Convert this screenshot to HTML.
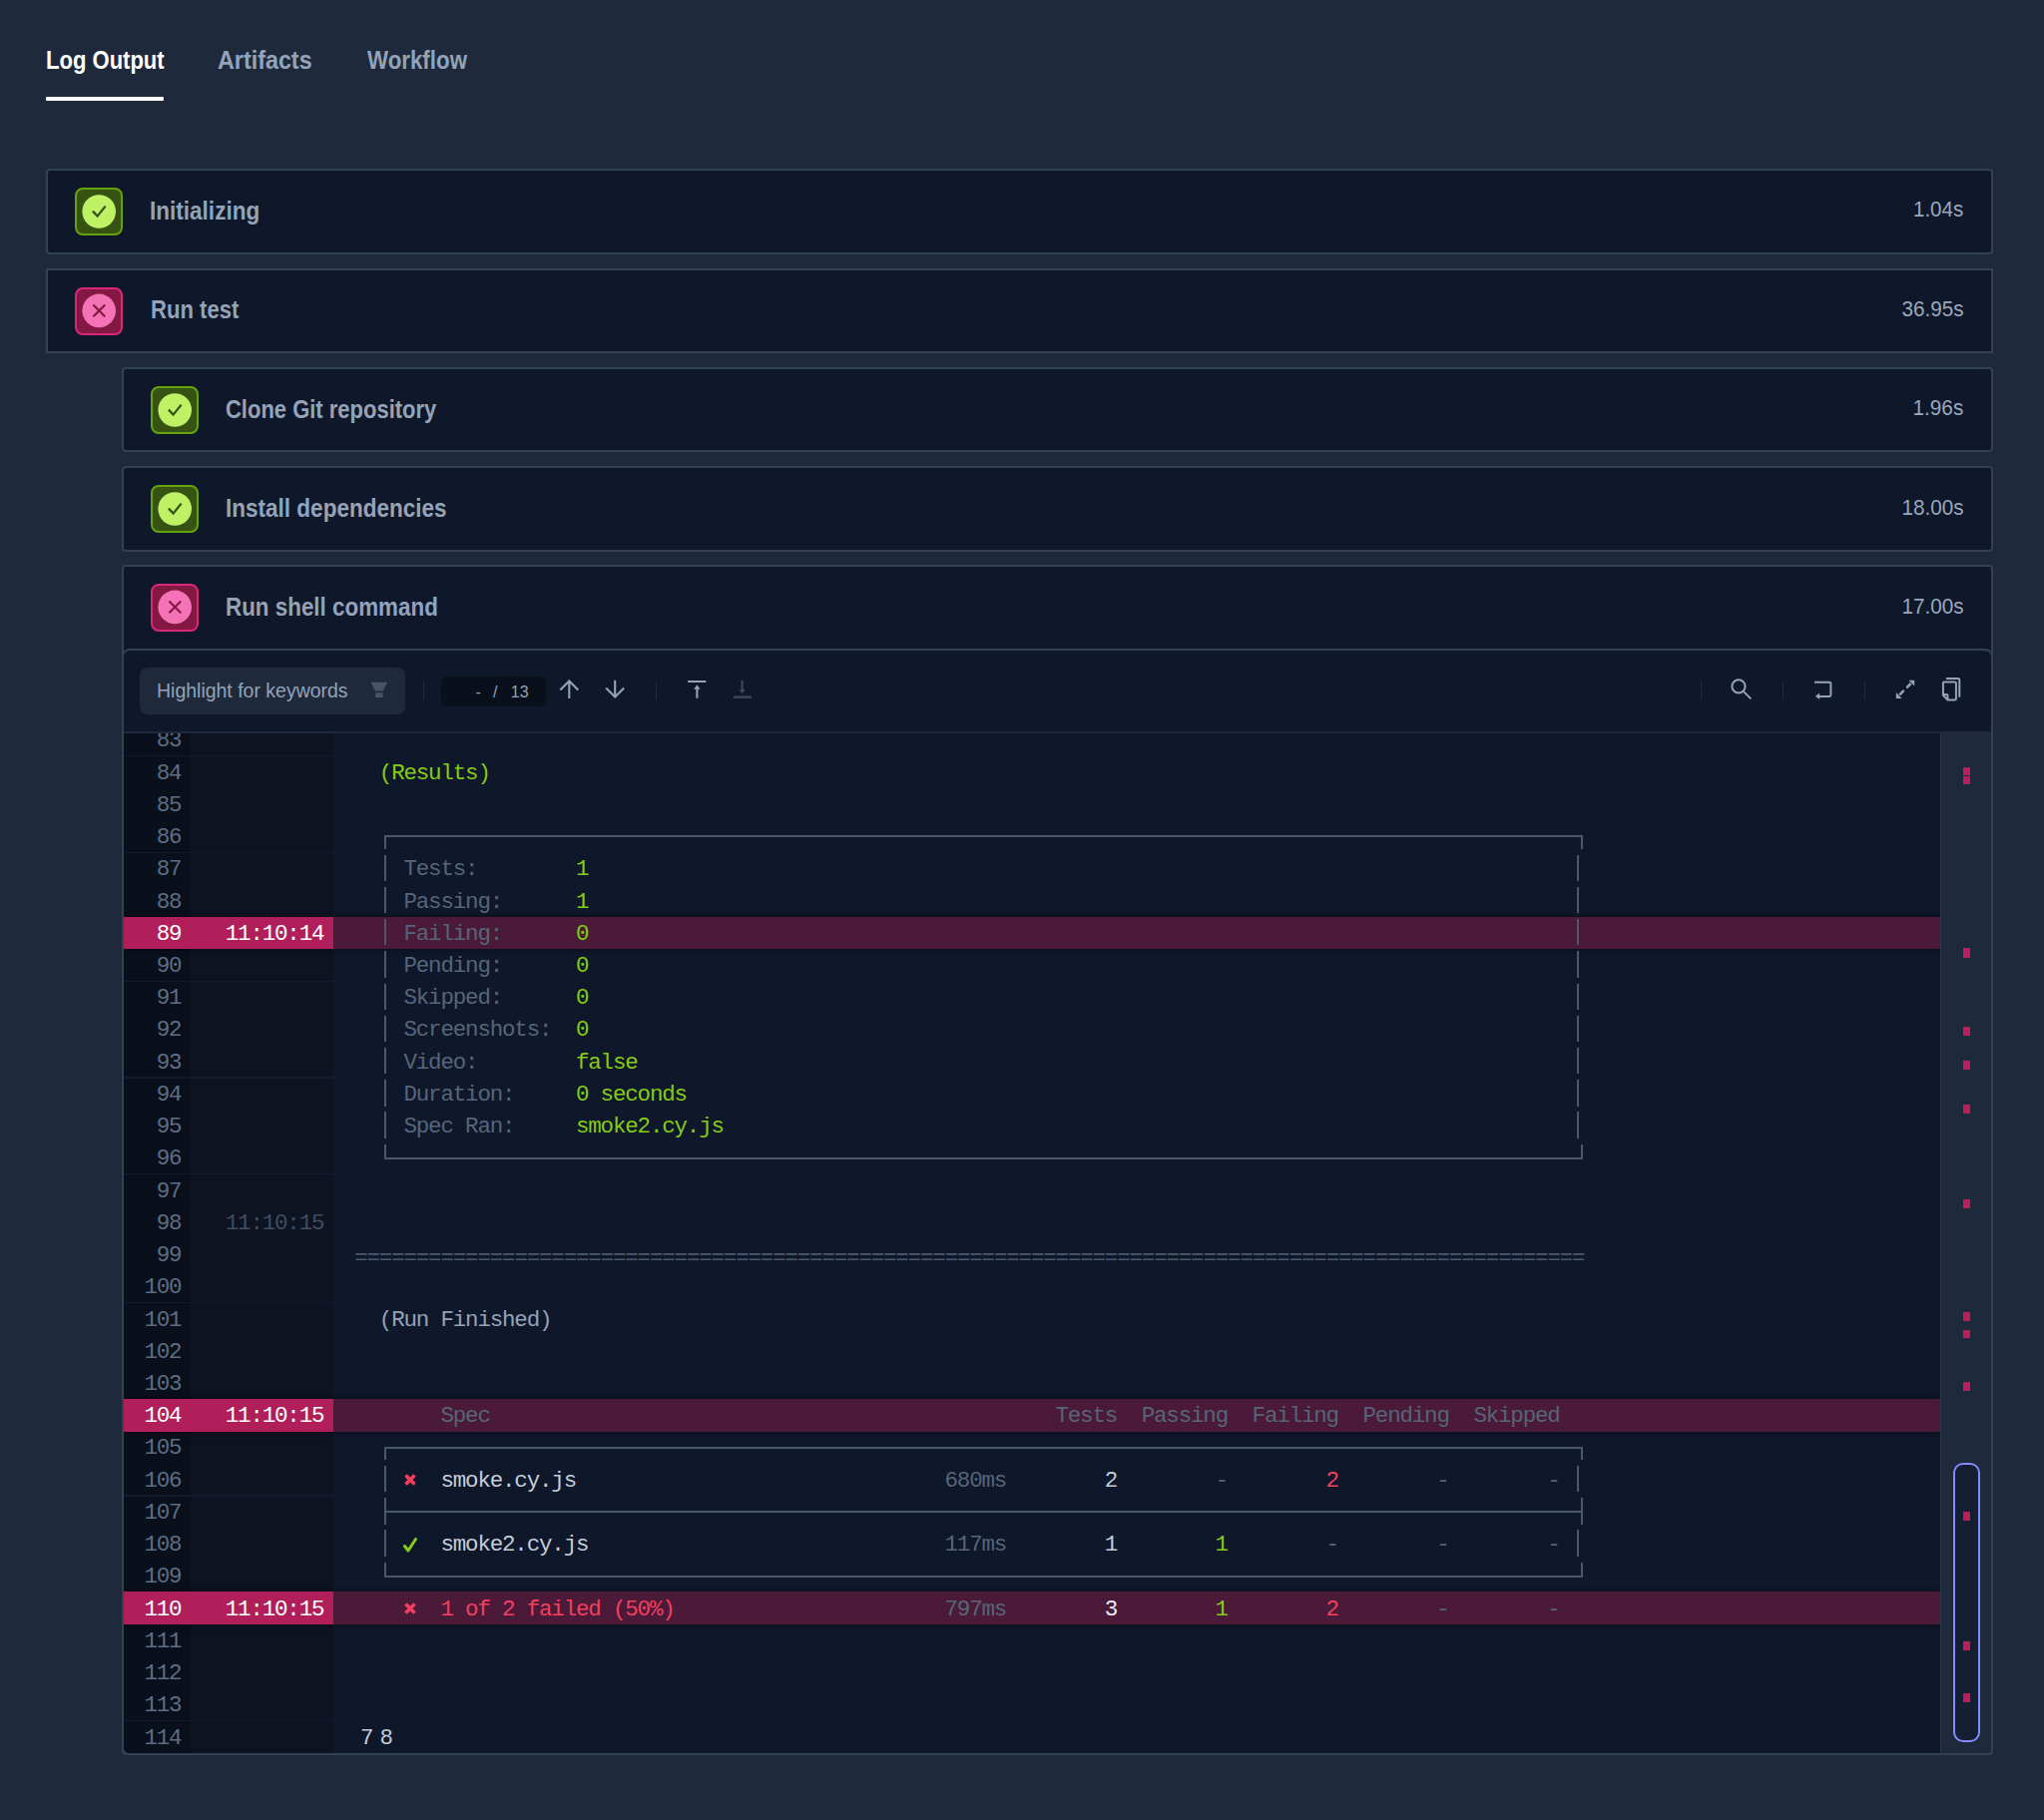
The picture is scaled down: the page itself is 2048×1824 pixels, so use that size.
<!DOCTYPE html><html><head><meta charset="utf-8"><style>
*{box-sizing:border-box;margin:0;padding:0}
html,body{width:2048px;height:1824px;overflow:hidden;background:#1e293b}
body{position:relative;font-family:"Liberation Sans",sans-serif}
.a{position:absolute}
.tab{position:absolute;font-weight:bold;font-size:25.5px;line-height:30px;white-space:nowrap;transform-origin:0 0}
.panel{position:absolute;height:86px;background:#0f172a;border:2px solid #334155;border-radius:4px}
.ttl{position:absolute;font-weight:bold;font-size:25px;line-height:30px;color:#94a3b8;white-space:nowrap;transform-origin:0 0}
.dur{position:absolute;font-size:22px;line-height:26px;color:#9aa8bc;white-space:nowrap;text-align:right;transform-origin:100% 0}
.ico{position:absolute;width:48px;height:48px;border-radius:8px;border:2px solid}
.ico.ok{background:#365314;border-color:#65a30d}
.ico.err{background:#831843;border-color:#db2777}
.ico svg{position:absolute;left:-2px;top:-2px}
.m{position:absolute;font-family:"Liberation Mono",monospace;white-space:pre;font-size:22.5px;letter-spacing:-1.180px;line-height:32.2px;height:32.2px}
.ln{text-align:right}
</style></head><body>
<div class="a" style="left:45.70px;top:40.29px;font-size:25.70px;line-height:40px;font-weight:bold;color:#ffffff;white-space:nowrap;transform:scaleX(0.8576);transform-origin:0 0">Log Output</div>
<div class="a" style="left:218.36px;top:40.19px;font-size:25.70px;line-height:40px;font-weight:bold;color:#94a3b8;white-space:nowrap;transform:scaleX(0.9078);transform-origin:0 0">Artifacts</div>
<div class="a" style="left:368.00px;top:40.19px;font-size:25.70px;line-height:40px;font-weight:bold;color:#94a3b8;white-space:nowrap;transform:scaleX(0.8685);transform-origin:0 0">Workflow</div>
<div class="a" style="left:46px;top:97px;width:118px;height:4px;background:#fff;border-radius:1px"></div>
<div class="panel" style="left:46px;top:169px;width:1951px"></div>
<div class="ico ok" style="left:75.0px;top:188.0px"><svg width="48" height="48" viewBox="0 0 48 48"><circle cx="24.2" cy="24" r="16.8" fill="#bef264"/><path d="M17.9 23.6 L22.6 28.6 L30.6 18.6" fill="none" stroke="#365314" stroke-width="2.3" stroke-linecap="butt" stroke-linejoin="miter"/></svg></div>
<div class="a" style="left:150.36px;top:191.44px;font-size:25.00px;line-height:40px;font-weight:bold;color:#94a3b8;white-space:nowrap;transform:scaleX(0.9017);transform-origin:0 0">Initializing</div>
<div class="a" style="right:80.26px;top:190.41px;font-size:22.20px;line-height:40px;font-weight:normal;color:#9aa8bc;white-space:nowrap;transform:scaleX(0.9270);transform-origin:100% 0">1.04s</div>
<div class="panel" style="left:46px;top:269px;width:1951px;border-radius:0;height:85px"></div>
<div class="ico err" style="left:75.0px;top:288.0px"><svg width="48" height="48" viewBox="0 0 48 48"><circle cx="24.2" cy="23.4" r="16.8" fill="#f472b6"/><path d="M18.4 17.5 L30.2 29.3 M30.2 17.5 L18.4 29.3" fill="none" stroke="#831843" stroke-width="2.1" stroke-linecap="butt"/></svg></div>
<div class="a" style="left:150.89px;top:290.34px;font-size:25.00px;line-height:40px;font-weight:bold;color:#94a3b8;white-space:nowrap;transform:scaleX(0.8837);transform-origin:0 0">Run test</div>
<div class="a" style="right:80.26px;top:290.31px;font-size:22.20px;line-height:40px;font-weight:normal;color:#9aa8bc;white-space:nowrap;transform:scaleX(0.9324);transform-origin:100% 0">36.95s</div>
<div class="panel" style="left:122px;top:368px;width:1875px;height:85px"></div>
<div class="ico ok" style="left:151.0px;top:387.0px"><svg width="48" height="48" viewBox="0 0 48 48"><circle cx="24.2" cy="24" r="16.8" fill="#bef264"/><path d="M17.9 23.6 L22.6 28.6 L30.6 18.6" fill="none" stroke="#365314" stroke-width="2.3" stroke-linecap="butt" stroke-linejoin="miter"/></svg></div>
<div class="a" style="left:225.89px;top:389.54px;font-size:25.00px;line-height:40px;font-weight:bold;color:#94a3b8;white-space:nowrap;transform:scaleX(0.8791);transform-origin:0 0">Clone Git repository</div>
<div class="a" style="right:80.26px;top:389.31px;font-size:22.20px;line-height:40px;font-weight:normal;color:#9aa8bc;white-space:nowrap;transform:scaleX(0.9348);transform-origin:100% 0">1.96s</div>
<div class="panel" style="left:122px;top:467px;width:1875px"></div>
<div class="ico ok" style="left:151.0px;top:486.0px"><svg width="48" height="48" viewBox="0 0 48 48"><circle cx="24.2" cy="24" r="16.8" fill="#bef264"/><path d="M17.9 23.6 L22.6 28.6 L30.6 18.6" fill="none" stroke="#365314" stroke-width="2.3" stroke-linecap="butt" stroke-linejoin="miter"/></svg></div>
<div class="a" style="left:225.89px;top:488.94px;font-size:25.00px;line-height:40px;font-weight:bold;color:#94a3b8;white-space:nowrap;transform:scaleX(0.9011);transform-origin:0 0">Install dependencies</div>
<div class="a" style="right:80.26px;top:488.51px;font-size:22.20px;line-height:40px;font-weight:normal;color:#9aa8bc;white-space:nowrap;transform:scaleX(0.9328);transform-origin:100% 0">18.00s</div>
<div class="a" style="left:122px;top:566px;width:1875px;height:1193px;background:#0f172a;border:2px solid #334155;border-radius:4px"></div>
<div class="ico err" style="left:151.0px;top:585.0px"><svg width="48" height="48" viewBox="0 0 48 48"><circle cx="24.2" cy="23.4" r="16.8" fill="#f472b6"/><path d="M18.4 17.5 L30.2 29.3 M30.2 17.5 L18.4 29.3" fill="none" stroke="#831843" stroke-width="2.1" stroke-linecap="butt"/></svg></div>
<div class="a" style="left:225.89px;top:587.94px;font-size:25.00px;line-height:40px;font-weight:bold;color:#94a3b8;white-space:nowrap;transform:scaleX(0.8959);transform-origin:0 0">Run shell command</div>
<div class="a" style="right:80.26px;top:587.71px;font-size:22.20px;line-height:40px;font-weight:normal;color:#9aa8bc;white-space:nowrap;transform:scaleX(0.9328);transform-origin:100% 0">17.00s</div>
<div class="a" style="left:122px;top:650px;width:1875px;height:1109px;border:2px solid #334155;border-radius:8px;background:#0f172a"></div>
<div class="a" style="left:124px;top:733px;width:1871px;height:2px;background:#1e293b"></div>
<div class="a" style="left:140px;top:669px;width:266px;height:47px;background:#1e293b;border-radius:8px"></div>
<div class="a" style="left:156.73px;top:672.16px;font-size:20.90px;line-height:40px;font-weight:normal;color:#94a3b8;white-space:nowrap;transform:scaleX(0.9323);transform-origin:0 0">Highlight for keywords</div>
<svg class="a" style="left:360px;top:675px" width="40" height="30" viewBox="360 675 40 30"><path d="M371.35 683.8 L388.2 683.8 L383.7 692.6 L376 692.6 Z M376.2 694.2 H383.5 V698.9 H376.2 Z" fill="#475569"/></svg>
<div class="a" style="left:423.5px;top:683px;width:1.5px;height:19px;background:#1e293b"></div>
<div class="a" style="left:442px;top:677.5px;width:105px;height:30px;background:#0a0f1c;border-radius:7px"></div>
<div class="a" style="left:476.4px;top:681.5px;font-size:16px;line-height:24px;color:#94a3b8;white-space:pre">-</div>
<div class="a" style="left:494.0px;top:681.5px;font-size:16px;line-height:24px;color:#94a3b8;white-space:pre">/</div>
<div class="a" style="left:511.8px;top:681.5px;font-size:16px;line-height:24px;color:#94a3b8;white-space:pre">13</div>
<svg class="a" style="left:0;top:0" width="2048" height="760" viewBox="0 0 2048 760"><g fill="none" stroke="#94a3b8" stroke-width="2.1" stroke-linecap="butt" stroke-linejoin="miter"><path d="M570.3 683 V700.1 M561.3 691.4 L570.3 682.4 L579.3 691.4"/><path d="M616.2 681.7 V698.6 M607.2 689.4 L616.2 698.6 L625.2 689.4"/><path d="M689.2 683 H707.4 M698.4 690 V699.7"/></g><path d="M698.4 686.2 L701.6 690.8 H695.2 Z" fill="#94a3b8"/><path d="M743.6 681.9 V691.8 M734.8 698.6 H752.8" fill="none" stroke="#3d4a5c" stroke-width="2.1"/><path d="M743.6 694.9 L746.6 690.9 H740.6 Z" fill="#3d4a5c"/><g fill="none" stroke="#94a3b8" stroke-width="2" stroke-linecap="butt"><circle cx="1742" cy="687.9" r="6.6"/><path d="M1746.8 692.9 L1754.4 700.4"/><path d="M1818 683.8 H1833 Q1834.4 683.8 1834.4 685.2 V696.5 Q1834.4 697.9 1833 697.9 H1822.5"/><path d="M1914.6 685 L1910.3 689.3 M1903.2 696.4 L1907.7 691.9" stroke-width="2.5"/><path d="M1949.9 680.1 H1961.9 Q1963.3 680.1 1963.3 681.5 V698.7"/><path d="M1946.9 696.8 V684.6 Q1946.9 683.4 1948.1 683.4 H1958.7 Q1959.9 683.4 1959.9 684.6 V700.2 Q1959.9 701.4 1958.7 701.4 H1951.5 Z M1946.9 695.9 H1950.3 Q1951.5 695.9 1951.5 697.1 V701.4"/></g><path d="M1818.8 697.8 L1823.2 694.6 V701 Z" fill="#94a3b8"/><path d="M1918.2 681.7 V687.6 L1912.3 681.7 Z M1899.8 699.9 V694.0 L1905.7 699.9 Z" fill="#94a3b8"/></svg>
<div class="a" style="left:656.5px;top:683px;width:1.5px;height:19px;background:#1e293b"></div>
<div class="a" style="left:1703.5px;top:683px;width:1.5px;height:19px;background:#1e293b"></div>
<div class="a" style="left:1785.5px;top:683px;width:1.5px;height:19px;background:#1e293b"></div>
<div class="a" style="left:1867.5px;top:683px;width:1.5px;height:19px;background:#1e293b"></div>
<div class="a" style="left:124px;top:735px;width:1820px;height:1022px;overflow:hidden;border-bottom-left-radius:6px;background:#0f172a">
<div class="a" style="left:0;top:0;width:210.4px;height:1022px;background:#0d1321"></div>
<div class="a" style="left:0;top:0;width:67px;height:1022px;background:#0a0f1c"></div>
<div class="a" style="left:0;top:22.05px;width:210.4px;height:1.2px;background:#121a2b"></div>
<div class="a" style="left:0;top:118.74px;width:210.4px;height:1.2px;background:#121a2b"></div>
<div class="a" style="left:0;top:247.66px;width:210.4px;height:1.2px;background:#121a2b"></div>
<div class="a" style="left:0;top:344.35px;width:210.4px;height:1.2px;background:#121a2b"></div>
<div class="a" style="left:0;top:441.04px;width:210.4px;height:1.2px;background:#121a2b"></div>
<div class="a" style="left:0;top:569.96px;width:210.4px;height:1.2px;background:#121a2b"></div>
<div class="a" style="left:0;top:666.65px;width:210.4px;height:1.2px;background:#121a2b"></div>
<div class="a" style="left:0;top:763.34px;width:210.4px;height:1.2px;background:#121a2b"></div>
<div class="a" style="left:0;top:860.03px;width:210.4px;height:1.2px;background:#121a2b"></div>
<div class="a" style="left:0;top:988.95px;width:210.4px;height:1.2px;background:#121a2b"></div>
<div class="a" style="left:0;top:183.50px;width:1820px;height:32.83px;background:#4a1a38;box-shadow:0 0 6px rgba(0,0,0,.45)"></div>
<div class="a" style="left:0;top:183.50px;width:210.4px;height:32.83px;background:#b11f5a"></div>
<div class="a" style="left:0;top:666.95px;width:1820px;height:32.83px;background:#4a1a38;box-shadow:0 0 6px rgba(0,0,0,.45)"></div>
<div class="a" style="left:0;top:666.95px;width:210.4px;height:32.83px;background:#b11f5a"></div>
<div class="a" style="left:0;top:860.33px;width:1820px;height:32.83px;background:#4a1a38;box-shadow:0 0 6px rgba(0,0,0,.45)"></div>
<div class="a" style="left:0;top:860.33px;width:210.4px;height:32.83px;background:#b11f5a"></div>
<div class="m ln" style="right:1762.58px;top:-8.58px;color:#5f6d82">83</div>
<div class="m ln" style="right:1762.58px;top:23.65px;color:#5f6d82">84</div>
<div class="m ln" style="right:1762.58px;top:55.88px;color:#5f6d82">85</div>
<div class="m ln" style="right:1762.58px;top:88.11px;color:#5f6d82">86</div>
<div class="m ln" style="right:1762.58px;top:120.34px;color:#5f6d82">87</div>
<div class="m ln" style="right:1762.58px;top:152.57px;color:#5f6d82">88</div>
<div class="m ln" style="right:1762.58px;top:184.80px;color:#ffffff">89</div>
<div class="m ln" style="right:1762.58px;top:217.03px;color:#5f6d82">90</div>
<div class="m ln" style="right:1762.58px;top:249.26px;color:#5f6d82">91</div>
<div class="m ln" style="right:1762.58px;top:281.49px;color:#5f6d82">92</div>
<div class="m ln" style="right:1762.58px;top:313.72px;color:#5f6d82">93</div>
<div class="m ln" style="right:1762.58px;top:345.95px;color:#5f6d82">94</div>
<div class="m ln" style="right:1762.58px;top:378.18px;color:#5f6d82">95</div>
<div class="m ln" style="right:1762.58px;top:410.41px;color:#5f6d82">96</div>
<div class="m ln" style="right:1762.58px;top:442.64px;color:#5f6d82">97</div>
<div class="m ln" style="right:1762.58px;top:474.87px;color:#5f6d82">98</div>
<div class="m ln" style="right:1762.58px;top:507.10px;color:#5f6d82">99</div>
<div class="m ln" style="right:1762.58px;top:539.33px;color:#5f6d82">100</div>
<div class="m ln" style="right:1762.58px;top:571.56px;color:#5f6d82">101</div>
<div class="m ln" style="right:1762.58px;top:603.79px;color:#5f6d82">102</div>
<div class="m ln" style="right:1762.58px;top:636.02px;color:#5f6d82">103</div>
<div class="m ln" style="right:1762.58px;top:668.25px;color:#ffffff">104</div>
<div class="m ln" style="right:1762.58px;top:700.48px;color:#5f6d82">105</div>
<div class="m ln" style="right:1762.58px;top:732.71px;color:#5f6d82">106</div>
<div class="m ln" style="right:1762.58px;top:764.94px;color:#5f6d82">107</div>
<div class="m ln" style="right:1762.58px;top:797.17px;color:#5f6d82">108</div>
<div class="m ln" style="right:1762.58px;top:829.40px;color:#5f6d82">109</div>
<div class="m ln" style="right:1762.58px;top:861.63px;color:#ffffff">110</div>
<div class="m ln" style="right:1762.58px;top:893.86px;color:#5f6d82">111</div>
<div class="m ln" style="right:1762.58px;top:926.09px;color:#5f6d82">112</div>
<div class="m ln" style="right:1762.58px;top:958.32px;color:#5f6d82">113</div>
<div class="m ln" style="right:1762.58px;top:990.55px;color:#5f6d82">114</div>
<div class="m ln" style="right:1619.68px;top:184.80px;color:#ffffff">11:10:14</div>
<div class="m ln" style="right:1619.68px;top:474.87px;color:#414d60">11:10:15</div>
<div class="m ln" style="right:1619.68px;top:668.25px;color:#ffffff">11:10:15</div>
<div class="m ln" style="right:1619.68px;top:861.63px;color:#ffffff">11:10:15</div>
<div class="m" style="left:255.84px;top:23.65px;color:#84cc16">(Results)</div>
<div class="m" style="left:280.48px;top:120.34px;color:#566579">Tests:</div>
<div class="m" style="left:452.96px;top:120.34px;color:#84cc16">1</div>
<div class="m" style="left:280.48px;top:152.57px;color:#566579">Passing:</div>
<div class="m" style="left:452.96px;top:152.57px;color:#84cc16">1</div>
<div class="m" style="left:280.48px;top:184.80px;color:#566579">Failing:</div>
<div class="m" style="left:452.96px;top:184.80px;color:#84cc16">0</div>
<div class="m" style="left:280.48px;top:217.03px;color:#566579">Pending:</div>
<div class="m" style="left:452.96px;top:217.03px;color:#84cc16">0</div>
<div class="m" style="left:280.48px;top:249.26px;color:#566579">Skipped:</div>
<div class="m" style="left:452.96px;top:249.26px;color:#84cc16">0</div>
<div class="m" style="left:280.48px;top:281.49px;color:#566579">Screenshots:</div>
<div class="m" style="left:452.96px;top:281.49px;color:#84cc16">0</div>
<div class="m" style="left:280.48px;top:313.72px;color:#566579">Video:</div>
<div class="m" style="left:452.96px;top:313.72px;color:#84cc16">false</div>
<div class="m" style="left:280.48px;top:345.95px;color:#566579">Duration:</div>
<div class="m" style="left:452.96px;top:345.95px;color:#84cc16">0 seconds</div>
<div class="m" style="left:280.48px;top:378.18px;color:#566579">Spec Ran:</div>
<div class="m" style="left:452.96px;top:378.18px;color:#84cc16">smoke2.cy.js</div>
<div class="m" style="left:231.20px;top:507.10px;color:#4b596c;margin-top:2.5px">====================================================================================================</div>
<div class="m" style="left:255.84px;top:571.56px;color:#94a3b8">(Run Finished)</div>
<div class="m" style="left:317.44px;top:668.25px;color:#566579">Spec</div>
<div class="m" style="left:933.44px;top:668.25px;color:#566579">Tests  Passing  Failing  Pending  Skipped</div>
<div class="m" style="left:317.44px;top:732.71px;color:#c3cdd9">smoke.cy.js</div>
<div class="m" style="left:822.56px;top:732.71px;color:#566579">680ms</div>
<div class="m" style="left:982.72px;top:732.71px;color:#c3cdd9">2</div>
<div class="m" style="left:1093.60px;top:732.71px;color:#566579">-</div>
<div class="m" style="left:1204.48px;top:732.71px;color:#f43f5e">2</div>
<div class="m" style="left:1315.36px;top:732.71px;color:#566579">-</div>
<div class="m" style="left:1426.24px;top:732.71px;color:#566579">-</div>
<div class="m" style="left:317.44px;top:797.17px;color:#c3cdd9">smoke2.cy.js</div>
<div class="m" style="left:822.56px;top:797.17px;color:#566579">117ms</div>
<div class="m" style="left:982.72px;top:797.17px;color:#c3cdd9">1</div>
<div class="m" style="left:1093.60px;top:797.17px;color:#84cc16">1</div>
<div class="m" style="left:1204.48px;top:797.17px;color:#566579">-</div>
<div class="m" style="left:1315.36px;top:797.17px;color:#566579">-</div>
<div class="m" style="left:1426.24px;top:797.17px;color:#566579">-</div>
<div class="m" style="left:317.44px;top:861.63px;color:#f43f5e">1 of 2 failed (50%)</div>
<div class="m" style="left:822.56px;top:861.63px;color:#566579">797ms</div>
<div class="m" style="left:982.72px;top:861.63px;color:#e8edf3">3</div>
<div class="m" style="left:1093.60px;top:861.63px;color:#84cc16">1</div>
<div class="m" style="left:1204.48px;top:861.63px;color:#f43f5e">2</div>
<div class="m" style="left:1315.36px;top:861.63px;color:#566579">-</div>
<div class="m" style="left:1426.24px;top:861.63px;color:#566579">-</div>
<div class="m" style="left:237.00px;top:990.55px;color:#c3cdd9">7</div>
<div class="m" style="left:256.50px;top:990.55px;color:#c3cdd9">8</div>
<svg class="a" style="left:279.64px;top:741.21px" width="14" height="14" viewBox="0 0 14 14"><path d="M2.5 2.5 L11.5 11.5 M11.5 2.5 L2.5 11.5" stroke="#f43f5e" stroke-width="3.6" stroke-linecap="butt"/></svg>
<svg class="a" style="left:279.64px;top:804.67px" width="14" height="16" viewBox="0 0 14 16"><path d="M1.5 9.5 L5 14 L12.5 2.5" fill="none" stroke="#84cc16" stroke-width="3" stroke-linejoin="round" stroke-linecap="round"/></svg>
<svg class="a" style="left:279.64px;top:870.13px" width="14" height="14" viewBox="0 0 14 14"><path d="M2.5 2.5 L11.5 11.5 M11.5 2.5 L2.5 11.5" stroke="#f43f5e" stroke-width="3.6" stroke-linecap="butt"/></svg>
<div class="a" style="left:261.00px;top:102.21px;width:1201.00px;height:2.0px;background:#4b586b"></div>
<div class="a" style="left:261.00px;top:103.21px;width:2.0px;height:12.50px;background:#4b586b"></div>
<div class="a" style="left:1460.00px;top:103.21px;width:2.0px;height:12.50px;background:#4b586b"></div>
<div class="a" style="left:261.00px;top:121.64px;width:2.0px;height:26.30px;background:#4b586b"></div>
<div class="a" style="left:1456.00px;top:121.64px;width:2.0px;height:26.30px;background:#4b586b"></div>
<div class="a" style="left:261.00px;top:153.87px;width:2.0px;height:26.30px;background:#4b586b"></div>
<div class="a" style="left:1456.00px;top:153.87px;width:2.0px;height:26.30px;background:#4b586b"></div>
<div class="a" style="left:261.00px;top:186.10px;width:2.0px;height:26.30px;background:#4b586b"></div>
<div class="a" style="left:1456.00px;top:186.10px;width:2.0px;height:26.30px;background:#4b586b"></div>
<div class="a" style="left:261.00px;top:218.33px;width:2.0px;height:26.30px;background:#4b586b"></div>
<div class="a" style="left:1456.00px;top:218.33px;width:2.0px;height:26.30px;background:#4b586b"></div>
<div class="a" style="left:261.00px;top:250.56px;width:2.0px;height:26.30px;background:#4b586b"></div>
<div class="a" style="left:1456.00px;top:250.56px;width:2.0px;height:26.30px;background:#4b586b"></div>
<div class="a" style="left:261.00px;top:282.79px;width:2.0px;height:26.30px;background:#4b586b"></div>
<div class="a" style="left:1456.00px;top:282.79px;width:2.0px;height:26.30px;background:#4b586b"></div>
<div class="a" style="left:261.00px;top:315.02px;width:2.0px;height:26.30px;background:#4b586b"></div>
<div class="a" style="left:1456.00px;top:315.02px;width:2.0px;height:26.30px;background:#4b586b"></div>
<div class="a" style="left:261.00px;top:347.25px;width:2.0px;height:26.30px;background:#4b586b"></div>
<div class="a" style="left:1456.00px;top:347.25px;width:2.0px;height:26.30px;background:#4b586b"></div>
<div class="a" style="left:261.00px;top:379.48px;width:2.0px;height:26.30px;background:#4b586b"></div>
<div class="a" style="left:1456.00px;top:379.48px;width:2.0px;height:26.30px;background:#4b586b"></div>
<div class="a" style="left:261.00px;top:424.51px;width:1201.00px;height:2.0px;background:#4b586b"></div>
<div class="a" style="left:261.00px;top:411.71px;width:2.0px;height:13.80px;background:#4b586b"></div>
<div class="a" style="left:1460.00px;top:411.71px;width:2.0px;height:13.80px;background:#4b586b"></div>
<div class="a" style="left:261.00px;top:714.58px;width:1201.00px;height:2.0px;background:#4b586b"></div>
<div class="a" style="left:261.00px;top:715.58px;width:2.0px;height:12.50px;background:#4b586b"></div>
<div class="a" style="left:1460.00px;top:715.58px;width:2.0px;height:12.50px;background:#4b586b"></div>
<div class="a" style="left:261.00px;top:734.01px;width:2.0px;height:26.30px;background:#4b586b"></div>
<div class="a" style="left:1456.00px;top:734.01px;width:2.0px;height:26.30px;background:#4b586b"></div>
<div class="a" style="left:261.00px;top:798.47px;width:2.0px;height:26.30px;background:#4b586b"></div>
<div class="a" style="left:1456.00px;top:798.47px;width:2.0px;height:26.30px;background:#4b586b"></div>
<div class="a" style="left:261.00px;top:779.04px;width:1201.00px;height:2.0px;background:#4b586b"></div>
<div class="a" style="left:261.00px;top:766.24px;width:2.0px;height:26.30px;background:#4b586b"></div>
<div class="a" style="left:1460.00px;top:766.24px;width:2.0px;height:26.30px;background:#4b586b"></div>
<div class="a" style="left:261.00px;top:843.50px;width:1201.00px;height:2.0px;background:#4b586b"></div>
<div class="a" style="left:261.00px;top:830.70px;width:2.0px;height:13.80px;background:#4b586b"></div>
<div class="a" style="left:1460.00px;top:830.70px;width:2.0px;height:13.80px;background:#4b586b"></div>
</div>
<div class="a" style="left:1944px;top:735px;width:51px;height:1022px;background:#1e293b;border-left:1px solid #2b3649;border-bottom-right-radius:3px"></div>
<div class="a" style="left:1956.6px;top:1466px;width:27.1px;height:280.3px;border:2px solid #818cf8;border-radius:10px;background:rgba(15,23,42,.55)"></div>
<div class="a" style="left:1966.7px;top:768.5px;width:7px;height:8.5px;background:#b91f5c"></div>
<div class="a" style="left:1966.7px;top:777.6px;width:7px;height:8.4px;background:#b91f5c"></div>
<div class="a" style="left:1966.7px;top:950.4px;width:7px;height:9.3px;background:#b91f5c"></div>
<div class="a" style="left:1966.7px;top:1029.0px;width:7px;height:8.7px;background:#b91f5c"></div>
<div class="a" style="left:1966.7px;top:1063.4px;width:7px;height:8.8px;background:#b91f5c"></div>
<div class="a" style="left:1966.7px;top:1107.0px;width:7px;height:9.0px;background:#b91f5c"></div>
<div class="a" style="left:1966.7px;top:1202.4px;width:7px;height:8.8px;background:#b91f5c"></div>
<div class="a" style="left:1966.7px;top:1315.2px;width:7px;height:8.8px;background:#b91f5c"></div>
<div class="a" style="left:1966.7px;top:1332.7px;width:7px;height:8.8px;background:#b91f5c"></div>
<div class="a" style="left:1966.7px;top:1384.8px;width:7px;height:8.8px;background:#b91f5c"></div>
<div class="a" style="left:1966.7px;top:1515.0px;width:7px;height:9.0px;background:#b91f5c"></div>
<div class="a" style="left:1966.7px;top:1645.0px;width:7px;height:9.0px;background:#b91f5c"></div>
<div class="a" style="left:1966.7px;top:1697.0px;width:7px;height:9.0px;background:#b91f5c"></div>
</body></html>
